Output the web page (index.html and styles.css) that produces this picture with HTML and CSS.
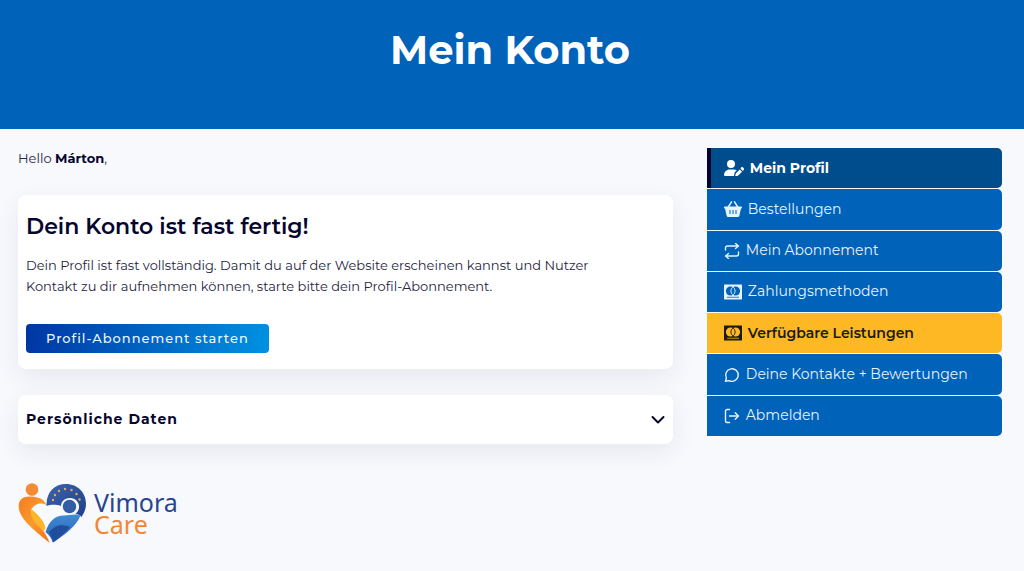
FILE: index.html
```html
<!DOCTYPE html>
<html lang="de">
<head>
<meta charset="utf-8">
<meta name="viewport" content="width=device-width, initial-scale=1">
<title>Mein Konto</title>
<link rel="stylesheet" href="styles.css">
</head>
<body>
<header class="hero"><h1 class="hero-title">Mein Konto</h1></header>
<div class="layout">
  <main class="content">
    <p class="greeting">Hello <strong>Márton</strong>,</p>
    <section class="card notice">
      <h2 class="notice-title">Dein Konto ist fast fertig!</h2>
      <p class="notice-text">Dein Profil ist fast vollständig. Damit du auf der Website erscheinen kannst und Nutzer<br>Kontakt zu dir aufnehmen können, starte bitte dein Profil-Abonnement.</p>
      <button class="cta" type="button">Profil-Abonnement starten</button>
    </section>
    <button class="card accordion" type="button" aria-expanded="false">
      <span>Persönliche Daten</span>
      <svg class="chevron" viewBox="0 0 14 10" aria-hidden="true"><path d="M1.500 2 7 7.500 12.500 2"/></svg>
    </button>
    <a class="brand" href="#">
      <svg class="brand-mark" viewBox="0 0 70 62" aria-hidden="true">
        <defs>
          <linearGradient id="orange" x1="0" y1="0" x2="1" y2="1"><stop offset="0" stop-color="#f47c20"/><stop offset=".5" stop-color="#fb9a2c"/><stop offset="1" stop-color="#f0701c"/></linearGradient>
          <linearGradient id="navy" x1="0" y1="0" x2="1" y2="1"><stop offset="0" stop-color="#3c62ad"/><stop offset="1" stop-color="#203f8c"/></linearGradient>
          <linearGradient id="sky" x1="0" y1="0" x2="0" y2="1"><stop offset="0" stop-color="#3f8bd4"/><stop offset="1" stop-color="#2860b4"/></linearGradient>
        </defs>
        <circle cx="14" cy="7.500" r="6.300" fill="#f58a35"/>
        <path d="M.7 24C.7 17 6 14 13 14.500c7 .5 13 2 15.500 8.500-6-3-12-1-15 4-2 7 6 15 11 21 2.500 3 5.500 8 7 13C18 49 .7 38 .7 24z" fill="url(#orange)"/>
        <path d="M13.500 27C19 32 26 38 27.500 46l-1.500 3C19 44 11 36 13.500 27z" fill="#fcb62c"/>
        <path d="M28.500 22C29 9 37 2 48 2c12 0 20 9 20 20 0 5-2 9-4.500 13-1.500-2-3.500-3-6-3 7-6 3-16-5.500-16-6 0-9 4-9 8-6-2-11-1-14.500 0z" fill="url(#navy)"/>
        <circle cx="51.500" cy="24.500" r="6.700" fill="#315ca6"/>
        <path d="M27.500 50C31 39 37 33.500 46 33.500c6 0 11-2 16.500 0C58 45 46 53 35 60.500 33.500 56 31 53 27.500 50z" fill="url(#sky)"/>
        <path d="M31 50c7-8 14-8 21-5-5 6-11 11-17 15.500-.5-4-2-7-4-10.500z" fill="#214d9f"/>
        <g fill="#e5ad50"><circle cx="35" cy="18" r="1.200"/><circle cx="37" cy="13" r="1.200"/><circle cx="41" cy="9" r="1.200"/><circle cx="47" cy="7" r="1.200"/><circle cx="53.500" cy="8" r="1.200"/><circle cx="58.500" cy="12" r="1.200"/><circle cx="61.500" cy="17.500" r="1.200"/></g>
      </svg>
      <span class="brand-name"><span>Vimora</span><span class="brand-accent">Care</span></span>
    </a>
  </main>
  <nav class="menu" aria-label="Konto">
    <a class="menu-item is-active" href="#" aria-current="page">
      <svg class="icon icon-wide" viewBox="0 0 640 512" aria-hidden="true"><path fill="currentColor" d="M224 256a128 128 0 1 0 0-256 128 128 0 1 0 0 256zm-46 48C80 304 0 384 0 482c0 17 13 30 30 30h296c-5-11-6-23-3-36l15-60c4-15 11-28 22-39l47-47c-30-17-63-26-100-26zM549 240c17-17 45-17 62 0l19 20c17 17 17 44 0 61l-29 30-71-71zM383 426l124-123 71 71-124 124c-4 4-9 7-15 8l-60 15c-6 2-12-1-16-4-3-4-5-10-3-16l15-60c1-6 4-11 8-15z"/></svg>
      <span>Mein Profil</span></a>
    <a class="menu-item" href="#">
      <svg class="icon icon-mid" viewBox="0 0 576 512" aria-hidden="true"><path fill="none" stroke="currentColor" stroke-width="48" stroke-linecap="round" d="M132 200 240 28M444 200 336 28"/><path fill="currentColor" fill-rule="evenodd" d="M32 176h512c18 0 32 14 32 32s-14 32-32 32l-50 220c-6 30-31 52-62 52H144c-31 0-56-22-62-52L32 240c-18 0-32-14-32-32s14-32 32-32zm144 112v128h32V288zm96 0v128h32V288zm96 0v128h32V288z"/></svg>
      <span>Bestellungen</span></a>
    <a class="menu-item" href="#">
      <svg class="icon icon-line" viewBox="0 0 16 16" aria-hidden="true"><path d="M1.500 7V5a2 2 0 0 1 2-2h11M11.500.5l3 2.500-3 2.500M14.500 9v2a2 2 0 0 1-2 2h-11M4.500 10.500l-3 2.500 3 2.500"/></svg>
      <span>Mein Abonnement</span></a>
    <a class="menu-item" href="#">
      <svg class="icon icon-mid" viewBox="0 0 18 15" aria-hidden="true"><rect width="18" height="15" rx=".6" fill="currentColor"/><g class="card-cut"><circle cx="6.500" cy="6.500" r="4.600"/><circle cx="11.500" cy="6.500" r="4.600"/><path d="M3 12.300h12v.8H3z"/></g><path d="M9 2.600a4.600 4.600 0 0 0 0 7.800 4.600 4.600 0 0 0 0-7.800z" fill="none" stroke="currentColor" stroke-width=".9"/></svg>
      <span>Zahlungsmethoden</span></a>
    <a class="menu-item is-highlight" href="#">
      <svg class="icon icon-mid" viewBox="0 0 18 15" aria-hidden="true"><rect width="18" height="15" rx=".6" fill="currentColor"/><g class="card-cut"><circle cx="6.500" cy="6.500" r="4.600"/><circle cx="11.500" cy="6.500" r="4.600"/><path d="M3 12.300h12v.8H3z"/></g><path d="M9 2.600a4.600 4.600 0 0 0 0 7.800 4.600 4.600 0 0 0 0-7.800z" fill="none" stroke="currentColor" stroke-width=".9"/></svg>
      <span>Verfügbare Leistungen</span></a>
    <a class="menu-item" href="#">
      <svg class="icon icon-line" viewBox="0 0 16 16" aria-hidden="true"><path d="M1.500 14.300 2.400 11A6.300 6.300 0 1 1 5 13.600z"/></svg>
      <span>Deine Kontakte + Bewertungen</span></a>
    <a class="menu-item" href="#">
      <svg class="icon icon-line" viewBox="0 0 16 16" aria-hidden="true"><path d="M5.500 1.500H3a1.500 1.500 0 0 0-1.500 1.500v10A1.500 1.500 0 0 0 3 14.500h2.500M5.500 8h9M11.200 4.700 14.500 8l-3.300 3.300"/></svg>
      <span>Abmelden</span></a>
  </nav>
</div>
</body>
</html>
```
FILE: styles.css
```css
* { box-sizing: border-box; }

body {
  margin: 0;
  background: #f8f9fd;
  color: #25253d;
  font-family: Montserrat, Inter, sans-serif;
  font-size: 13px;
  line-height: 21px;
}

h1, h2, p { margin: 0; }
a { color: inherit; text-decoration: none; }
button { font: inherit; border: 0; cursor: pointer; }

.hero {
  padding: 26px 22px 55px 18px;
  background: #0062b9;
  color: #fff;
  text-align: center;
}
.hero-title { font-size: 40px; line-height: 48px; font-weight: 700; }

.layout {
  display: grid;
  grid-template-columns: minmax(0, 1fr) 30%;
  gap: 34px;
  align-items: start;
  padding: 19px 22px 24px 18px;
}

.content { display: flex; flex-direction: column; align-items: stretch; }
.greeting strong { color: #05052e; }

.card {
  background: #fff;
  border-radius: 8px;
  box-shadow: 0 8px 24px rgba(30, 34, 70, 0.08);
}
.notice { margin-top: 26px; padding: 16px 8px; }
.notice-title { color: #05052e; font-size: 22px; line-height: 32px; font-weight: 600; }
.notice-text { margin-top: 12px; }

.cta {
  display: block;
  margin-top: 27px;
  padding: 4px 20px;
  border-radius: 4px;
  background: linear-gradient(100deg, #0035a3, #0092e2);
  color: #e9f8ff;
  font-size: 13px;
  font-weight: 500;
  letter-spacing: 1px;
}

.accordion {
  display: flex;
  align-items: center;
  justify-content: space-between;
  margin-top: 26px;
  padding: 14px 8px;
  color: #05052e;
  font-size: 14px;
  font-weight: 700;
  letter-spacing: 1px;
  text-align: left;
}
.chevron { width: 14px; height: 10px; fill: none; stroke: currentColor; stroke-width: 2; stroke-linecap: round; stroke-linejoin: round; }

.brand { display: flex; align-items: center; gap: 6px; margin-top: 38px; align-self: flex-start; }
.brand-mark { width: 70px; height: 62px; }
.brand-name {
  display: flex;
  flex-direction: column;
  color: #27458c;
  font-family: "Noto Sans", sans-serif;
  font-size: 25px;
  line-height: 22px;
}
.brand-accent { color: #f5862f; }

.menu { display: flex; flex-direction: column; gap: 1px; min-height: 288px; }
.menu-item {
  --row: #0062b9;
  display: flex;
  flex: 1;
  align-items: center;
  gap: 6px;
  padding: 9px 17px;
  border-radius: 0 5px 5px 0;
  background: var(--row);
  color: #e4f4ff;
  font-size: 14px;
}
.is-active { --row: #004d8e; padding-left: 13px; border-left: 4px solid #03032f; color: #fff; font-weight: 700; }
.is-highlight { --row: #fdb823; color: #1c1a18; font-weight: 600; }

.icon { flex: none; height: 16px; }
.icon-wide { width: 20px; }
.icon-mid { width: 18px; }
.icon-line { width: 16px; fill: none; stroke: currentColor; stroke-width: 1.4; stroke-linecap: round; stroke-linejoin: round; }
.card-cut { fill: var(--row); }
```
